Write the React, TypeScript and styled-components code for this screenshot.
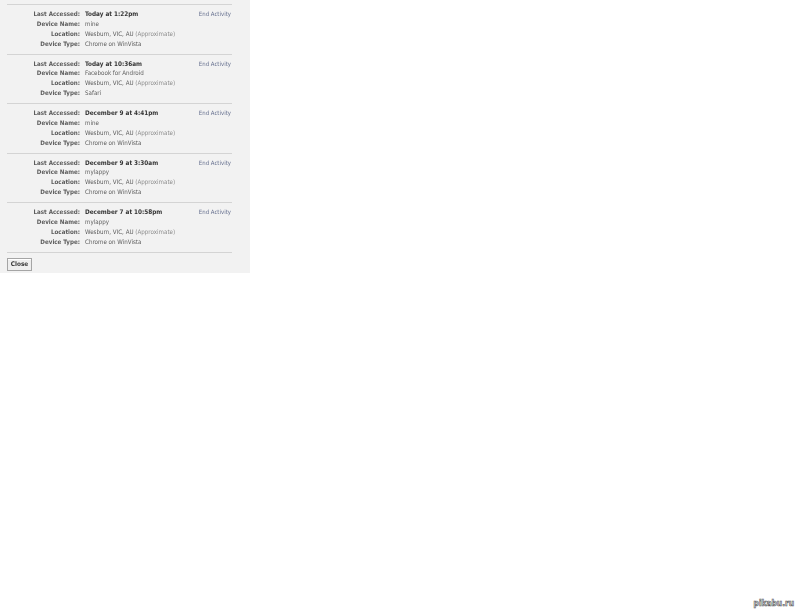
import styled, { createGlobalStyle } from "styled-components";

const GlobalStyle = createGlobalStyle`
  html, body {
    margin: 0;
    padding: 0;
    background: #ffffff;
  }
  body {
    font-family: "DejaVu Sans", "Liberation Sans", Arial, sans-serif;
    font-stretch: condensed;
  }
`;

const Page = styled.div`
  position: relative;
  width: 800px;
  height: 611px;
  overflow: hidden;
  background: #ffffff;
`;

const Panel = styled.div`
  width: 250px;
  height: 273px;
  box-sizing: border-box;
  padding: 4px 18px 0 7px;
  background: #f2f2f2;
  filter: blur(0.35px);
`;

const Session = styled.div`
  display: grid;
  grid-template-columns: 73px 1fr auto;
  grid-auto-rows: 9.9px;
  align-items: baseline;
  column-gap: 5px;
  height: 49.5px;
  box-sizing: border-box;
  padding: 4px 1px 0 0;
  border-top: 1px solid #d4d4d4;
`;

const Label = styled.div`
  grid-column: 1;
  text-align: right;
  font-size: 6.2px;
  line-height: 9.9px;
  font-weight: 700;
  color: #5c5c5c;
  white-space: nowrap;
`;

const Value = styled.div<{ $strong?: boolean }>`
  grid-column: 2;
  font-size: ${(p) => (p.$strong ? "6.35px" : "6.2px")};
  line-height: 9.9px;
  font-weight: ${(p) => (p.$strong ? 700 : 400)};
  color: ${(p) => (p.$strong ? "#333333" : "#5c5c5c")};
  white-space: nowrap;
`;

const Muted = styled.span`
  color: #8c8c8c;
`;

const EndLink = styled.a`
  grid-column: 3;
  grid-row: 1;
  font-size: 6px;
  line-height: 9.9px;
  color: #66708f;
  white-space: nowrap;
`;

const Footer = styled.div`
  padding-top: 5px;
  border-top: 1px solid #d4d4d4;
`;

const CloseButton = styled.button`
  display: block;
  width: 25px;
  height: 13px;
  padding: 0;
  font-family: inherit;
  font-stretch: condensed;
  font-size: 6.4px;
  line-height: 11px;
  font-weight: 700;
  color: #333333;
  background: #eeeeee;
  border: 1px solid #a5a5a5;
  box-shadow: inset 0 1px 0 #ffffff;
`;

const Watermark = styled.div`
  position: absolute;
  right: 6px;
  bottom: 3px;
  font-size: 8.3px;
  line-height: 10px;
  font-weight: 700;
  color: #ffffff;
  -webkit-text-stroke: 0.6px #555555;
`;

type SessionData = {
  accessed: string;
  device: string;
  type: string;
};

const SESSIONS: SessionData[] = [
  { accessed: "Today at 1:22pm", device: "mine", type: "Chrome on WinVista" },
  { accessed: "Today at 10:36am", device: "Facebook for Android", type: "Safari" },
  { accessed: "December 9 at 4:41pm", device: "mine", type: "Chrome on WinVista" },
  { accessed: "December 9 at 3:30am", device: "mylappy", type: "Chrome on WinVista" },
  { accessed: "December 7 at 10:58pm", device: "mylappy", type: "Chrome on WinVista" },
];

export default function App() {
  return (
    <Page>
      <GlobalStyle />
      <Panel>
        {SESSIONS.map((session, index) => (
          <Session key={index}>
            <Label>Last Accessed:</Label>
            <Value $strong>{session.accessed}</Value>
            <EndLink>End Activity</EndLink>
            <Label>Device Name:</Label>
            <Value>{session.device}</Value>
            <Label>Location:</Label>
            <Value>
              Wesburn, VIC, AU <Muted>(Approximate)</Muted>
            </Value>
            <Label>Device Type:</Label>
            <Value>{session.type}</Value>
          </Session>
        ))}
        <Footer>
          <CloseButton>Close</CloseButton>
        </Footer>
      </Panel>
      <Watermark>pikabu.ru</Watermark>
    </Page>
  );
}
